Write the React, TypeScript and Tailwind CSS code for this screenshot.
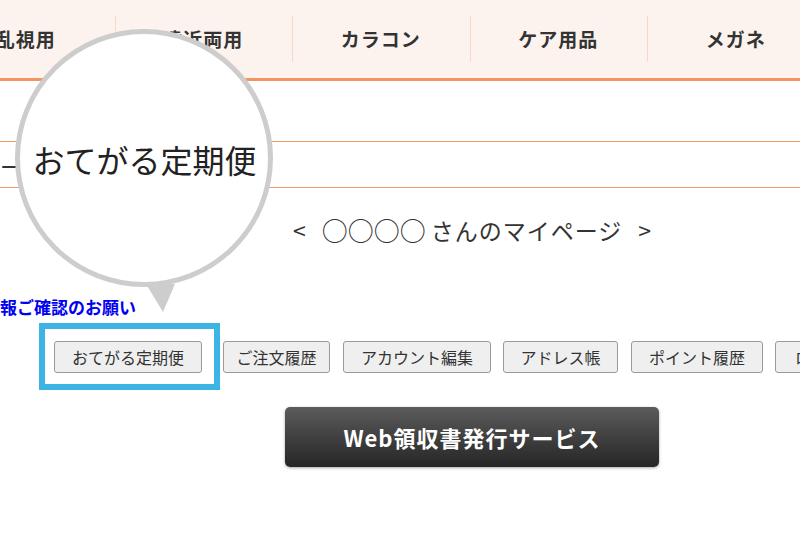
import React from "react";

const navItems = ["乱視用", "遠近両用", "カラコン", "ケア用品", "メガネ"];

const menuButtons = [
  { label: "おてがる定期便", w: "w-[148px]", ml: "ml-[54px]" },
  { label: "ご注文履歴", w: "w-[107px]", ml: "ml-[21px]" },
  { label: "アカウント編集", w: "w-[148px]", ml: "ml-[13px]" },
  { label: "アドレス帳", w: "w-[115px]", ml: "ml-[12px]" },
  { label: "ポイント履歴", w: "w-[132px]", ml: "ml-[13px]" },
  { label: "ログアウト", w: "w-[120px]", ml: "ml-[12px]" },
];

function NavBar() {
  return (
    <nav className="h-[81px] bg-[#fdf3ee] border-b-[3px] border-[#f7935f]">
      <div className="flex h-full -ml-[63px]">
        {navItems.map((item, i) => (
          <div key={item} className="relative flex w-[177.5px] shrink-0 items-center justify-center">
            {i > 0 && <div className="absolute left-0 top-[16px] h-[46px] w-px bg-[#f7d9c6]" />}
            <span className="text-[19px] font-bold tracking-[1px] text-[#333]">{item}</span>
          </div>
        ))}
      </div>
    </nav>
  );
}

function Magnifier() {
  return (
    <div className="absolute left-[15px] top-[29px]">
      <div className="flex h-[258px] w-[258px] items-center justify-center rounded-full border-[5px] border-[#cdcdcd] bg-white">
        <span className="text-[32px] leading-none text-[#222] pt-[1px] pl-[1px]">おてがる定期便</span>
      </div>
      <svg className="absolute left-[131px] top-[255px]" width="30" height="29" viewBox="0 0 30 29">
        <polygon points="0,0 29,0 17,28" fill="#cdcdcd" />
      </svg>
    </div>
  );
}

export default function App() {
  return (
    <div className="relative h-[550px] w-[800px] overflow-hidden bg-white font-['Noto_Sans_CJK_JP',sans-serif] text-[#333]">
      <NavBar />

      <div className="mt-[60px] h-px bg-[#f39a68]" />
      <div className="flex h-[45px] items-center">
        <span className="text-[22px] leading-none text-[#333]">ー</span>
      </div>
      <div className="h-px bg-[#f39a68]" />

      <div className="ml-[285px] flex w-[374px] items-center justify-center pt-[27px] text-[23px] leading-[30px] text-[#333]">
        <span>&lt;</span>
        <span className="ml-[16px] text-[26px] tracking-[0px]">○○○○</span>
        <span className="ml-[5px] tracking-[1px]">さんのマイページ</span>
        <span className="ml-[16px]">&gt;</span>
      </div>

      <div className="mt-[50px] text-[17px] font-bold leading-[24px] text-[#0000f0]">報ご確認のお願い</div>

      <div className="mt-[22px] flex">
        {menuButtons.map((b) => (
          <button
            key={b.label}
            className={`${b.w} ${b.ml} h-[32px] shrink-0 rounded-[3px] border border-[#9a9a9a] bg-[#efefef] text-[16px] text-[#333]`}
          >
            {b.label}
          </button>
        ))}
      </div>

      <div className="ml-[285px] mt-[34px] flex h-[60px] w-[374px] items-center justify-center rounded-[5px] bg-gradient-to-b from-[#5c5c5c] to-[#262626] shadow-[0_1px_3px_rgba(0,0,0,0.35)]">
        <span className="text-[22px] font-bold tracking-[1px] text-white">Web領収書発行サービス</span>
      </div>

      <Magnifier />

      <div className="absolute left-[39px] top-[323px] h-[67px] w-[181px] border-[6px] border-[#3cb4e4]" />
    </div>
  );
}
